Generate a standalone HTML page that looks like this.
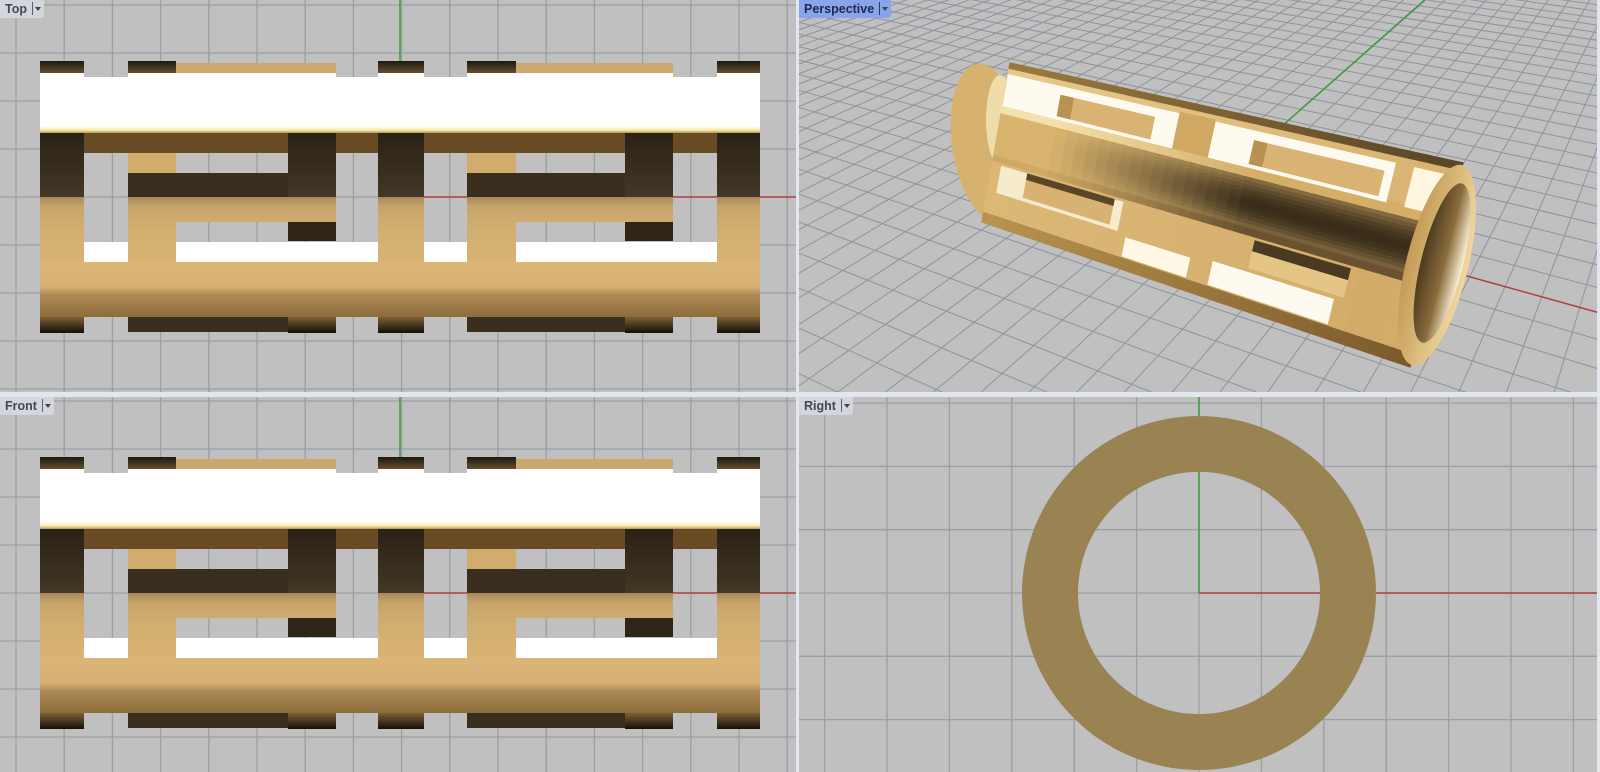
<!DOCTYPE html>
<html><head><meta charset="utf-8"><style>
html,body{margin:0;padding:0;background:#e4e7ec;overflow:hidden;width:1600px;height:772px;}
body{position:relative;font-family:"Liberation Sans",sans-serif;}
svg{position:absolute;left:0;top:0;}
.lab{position:absolute;height:18px;line-height:18px;font-size:12.5px;font-weight:bold;color:#3e4858;background:#d3d6dc;padding:0 0 0 5px;border-radius:0 0 3px 0;}
.lab span{display:inline-block;border-left:1px solid #59606c;margin-left:5px;width:11px;height:13px;vertical-align:-2px;position:relative}
.lab span:after{content:"";position:absolute;left:2px;top:5px;border-left:3.5px solid transparent;border-right:3.5px solid transparent;border-top:4px solid #444}
</style></head><body>
<svg width="1600" height="772" viewBox="0 0 1600 772" xmlns="http://www.w3.org/2000/svg">
<defs>
<clipPath id="cTop"><rect x="0" y="0" width="796" height="392"/></clipPath>
<clipPath id="cFront"><rect x="0" y="397" width="796" height="375"/></clipPath>
<clipPath id="cPersp"><rect x="799" y="0" width="798" height="392"/></clipPath>
<clipPath id="cRight"><rect x="799" y="397" width="798" height="375"/></clipPath>
<linearGradient id="gTop" x1="0" y1="0" x2="0" y2="1"><stop offset="0" stop-color="#1c1812"/><stop offset="1" stop-color="#6a5330"/></linearGradient>
<linearGradient id="gDark" x1="0" y1="0" x2="0" y2="1"><stop offset="0" stop-color="#2a2216"/><stop offset="1" stop-color="#433726"/></linearGradient>
<linearGradient id="gGlow" x1="0" y1="0" x2="0" y2="1"><stop offset="0" stop-color="#ffffff"/><stop offset="0.5" stop-color="#fbeea8"/><stop offset="1" stop-color="#9c7a3e"/></linearGradient>
<linearGradient id="gTan" x1="0" y1="197" x2="0" y2="262" gradientUnits="userSpaceOnUse"><stop offset="0" stop-color="#a8885a"/><stop offset="0.15" stop-color="#c6a46a"/><stop offset="0.5" stop-color="#d2ae70"/><stop offset="1" stop-color="#d8b374"/></linearGradient>
<linearGradient id="gBot" x1="0" y1="262" x2="0" y2="317" gradientUnits="userSpaceOnUse"><stop offset="0" stop-color="#dbb676"/><stop offset="0.45" stop-color="#d6b073"/><stop offset="0.6" stop-color="#ad8b55"/><stop offset="1" stop-color="#8c6c3b"/></linearGradient>
<linearGradient id="gEnd" x1="0" y1="0" x2="0" y2="1"><stop offset="0" stop-color="#7e6034"/><stop offset="1" stop-color="#140f08"/></linearGradient>
<linearGradient id="gCap" x1="0" y1="0" x2="1" y2="0"><stop offset="0" stop-color="#c49a55"/><stop offset="1" stop-color="#f0d8a0"/></linearGradient>
<linearGradient id="gHole" x1="0" y1="0" x2="1" y2="0"><stop offset="0" stop-color="#4b3a20"/><stop offset="0.55" stop-color="#8a6c3c"/><stop offset="1" stop-color="#fbf2d8"/></linearGradient>
<g id="tube">
 <rect x="40" y="61" width="44" height="13" fill="url(#gTop)"/>
 <rect x="128" y="61" width="48" height="13" fill="url(#gTop)"/>
 <rect x="176" y="63" width="160" height="11" fill="#cba870"/>
 <rect x="378" y="61" width="46" height="13" fill="url(#gTop)"/>
 <rect x="467" y="61" width="49" height="13" fill="url(#gTop)"/>
 <rect x="516" y="63" width="157" height="11" fill="#cba870"/>
 <rect x="717" y="61" width="43" height="13" fill="url(#gTop)"/>
 <rect x="40" y="73" width="44" height="5" fill="#fff"/>
 <rect x="128" y="73" width="208" height="5" fill="#fff"/>
 <rect x="378" y="73" width="46" height="5" fill="#fff"/>
 <rect x="467" y="73" width="206" height="5" fill="#fff"/>
 <rect x="717" y="73" width="43" height="5" fill="#fff"/>
 <rect x="40" y="77" width="720" height="50" fill="#fff"/>
 <rect x="40" y="126" width="720" height="8" fill="url(#gGlow)"/>
 <rect x="40" y="133" width="720" height="20" fill="#694b26"/>
 <rect x="128" y="153" width="48" height="20" fill="#d2ac6c"/>
 <rect x="467" y="153" width="49" height="20" fill="#d2ac6c"/>
 <rect x="128" y="173" width="208" height="24" fill="#3a2f1f"/>
 <rect x="467" y="173" width="206" height="24" fill="#3a2f1f"/>
 <rect x="40" y="133" width="44" height="64" fill="url(#gDark)"/>
 <rect x="288" y="133" width="48" height="64" fill="url(#gDark)"/>
 <rect x="378" y="133" width="46" height="64" fill="url(#gDark)"/>
 <rect x="625" y="133" width="48" height="64" fill="url(#gDark)"/>
 <rect x="717" y="133" width="43" height="64" fill="url(#gDark)"/>
 <rect x="40" y="197" width="44" height="65" fill="url(#gTan)"/>
 <rect x="128" y="197" width="48" height="65" fill="url(#gTan)"/>
 <rect x="176" y="197" width="160" height="25" fill="url(#gTan)"/>
 <rect x="378" y="197" width="46" height="65" fill="url(#gTan)"/>
 <rect x="467" y="197" width="49" height="65" fill="url(#gTan)"/>
 <rect x="516" y="197" width="157" height="25" fill="url(#gTan)"/>
 <rect x="717" y="197" width="43" height="65" fill="url(#gTan)"/>
 <rect x="288" y="222" width="48" height="19" fill="#2e2517"/>
 <rect x="625" y="222" width="48" height="19" fill="#2e2517"/>
 <rect x="84" y="242" width="44" height="20" fill="#fff"/>
 <rect x="176" y="242" width="202" height="20" fill="#fff"/>
 <rect x="424" y="242" width="43" height="20" fill="#fff"/>
 <rect x="516" y="242" width="201" height="20" fill="#fff"/>
 <rect x="40" y="262" width="720" height="55" fill="url(#gBot)"/>
 <rect x="40" y="317" width="44" height="16" fill="url(#gEnd)"/>
 <rect x="128" y="317" width="160" height="15" fill="#3a2e1f"/>
 <rect x="288" y="317" width="48" height="16" fill="url(#gEnd)"/>
 <rect x="378" y="317" width="46" height="16" fill="url(#gEnd)"/>
 <rect x="467" y="317" width="158" height="15" fill="#3a2e1f"/>
 <rect x="625" y="317" width="48" height="16" fill="url(#gEnd)"/>
 <rect x="717" y="317" width="43" height="16" fill="url(#gEnd)"/>
</g>
</defs>

<rect x="0" y="0" width="796" height="392" fill="#c0c0c0"/>
<rect x="0" y="397" width="796" height="375" fill="#c0c0c0"/>
<rect x="799" y="0" width="798" height="392" fill="#c0c0c0"/>
<rect x="799" y="397" width="798" height="375" fill="#c0c0c0"/>

<g id="gridTop" clip-path="url(#cTop)" stroke="#9a9ea5" stroke-width="1.3"></g>
<g id="gridFront" clip-path="url(#cFront)" stroke="#9a9ea5" stroke-width="1.3"></g>
<g id="gridRight" clip-path="url(#cRight)" stroke="#9a9ea5" stroke-width="1.3"></g>
<g id="gridPersp" clip-path="url(#cPersp)" stroke="#8e939b" stroke-width="1"></g>

<line x1="400" y1="0" x2="400" y2="62" stroke="#3c9a3c" stroke-width="1.5"/>
<line x1="400" y1="197" x2="796" y2="197" stroke="#b04040" stroke-width="1.5"/>
<line x1="400" y1="397" x2="400" y2="458" stroke="#3c9a3c" stroke-width="1.5"/>
<line x1="400" y1="593" x2="796" y2="593" stroke="#b04040" stroke-width="1.5"/>
<use href="#tube"/>
<use href="#tube" y="396"/>

<g clip-path="url(#cPersp)">
<line x1="1197" y1="201" x2="1425" y2="0" stroke="#3c9a3c" stroke-width="1.5"/>
<line x1="1197" y1="201" x2="1600" y2="313" stroke="#b04040" stroke-width="1.5"/>
<g id="persp"></g>
</g>

<g clip-path="url(#cRight)">
<line x1="1199" y1="397" x2="1199" y2="593" stroke="#3c9a3c" stroke-width="1.5"/>
<line x1="1199" y1="593" x2="1597" y2="593" stroke="#b04040" stroke-width="1.5"/>
<path fill="#998353" fill-rule="evenodd" d="M1022,593 a177,177 0 1,0 354,0 a177,177 0 1,0 -354,0 Z M1078,593 a121,121 0 1,0 242,0 a121,121 0 1,0 -242,0 Z"/>
</g>

<rect x="796" y="0" width="3" height="772" fill="#e2e6ee"/>
<rect x="0" y="392" width="1600" height="5" fill="#e2e6ee"/>
<rect x="1597" y="0" width="3" height="772" fill="#e2e6ee"/>
</svg>

<div class="lab" style="left:0;top:0;">Top<span></span></div>
<div class="lab" style="left:799px;top:0;background:#8aa4ec;color:#1e2a4a;">Perspective<span style="border-color:#2a3a6a"></span></div>
<div class="lab" style="left:0;top:397px;">Front<span></span></div>
<div class="lab" style="left:799px;top:397px;">Right<span></span></div>

<script>
(function(){
var NS="http://www.w3.org/2000/svg";
function ln(g,x1,y1,x2,y2){var l=document.createElementNS(NS,"line");l.setAttribute("x1",x1);l.setAttribute("y1",y1);l.setAttribute("x2",x2);l.setAttribute("y2",y2);g.appendChild(l);}
function poly(g,pts,fill,stroke){var p=document.createElementNS(NS,"polygon");p.setAttribute("points",pts.map(function(q){return q[0].toFixed(1)+","+q[1].toFixed(1)}).join(" "));p.setAttribute("fill",fill);if(stroke){p.setAttribute("stroke",fill);p.setAttribute("stroke-width","1.2");}g.appendChild(p);return p;}
var gt=document.getElementById("gridTop"),gf=document.getElementById("gridFront"),gr=document.getElementById("gridRight"),gp=document.getElementById("gridPersp");
for(var i=0;i<17;i++){var x=16+48.2*i;ln(gt,x,0,x,392);ln(gf,x,397,x,772);}
for(var j=0;j<9;j++){var y=5+48*j;ln(gt,0,y,796,y);ln(gf,0,y+396,796,y+396);}
for(i=-7;i<8;i++){x=1199+62.4*i;ln(gr,x,397,x,772);}
for(j=-3;j<4;j++){y=593+63.3*j;ln(gr,799,y,1597,y);}
var O=[1197,201],V1=[-605,-300],V2=[1763,-300],a=0.0146,b=0.032;
function P(u,v){var d=a*u+b*v+1;return [(a*u*V1[0]+b*v*V2[0]+O[0])/d,(a*u*V1[1]+b*v*V2[1]+O[1])/d];}
var N=160;
for(var u=-N;u<=N;u++){var v1=(0.03-1-a*u)/b,v2=400;if(v2<=v1)continue;var p1=P(u,v1),p2=P(u,v2);ln(gp,p1[0],p1[1],p2[0],p2[1]);}
for(var v=-N;v<=N;v++){var u1=(0.03-1-b*v)/a,u2=400;if(u2<=u1)continue;p1=P(u1,v);p2=P(u2,v);ln(gp,p1[0],p1[1],p2[0],p2[1]);}
var g=document.getElementById("persp");
var TL=[1010,63],TR=[1463,163],BR=[1410,367],BL=[982,222];
function Q(s,t){var L=[TL[0]+(BL[0]-TL[0])*t,TL[1]+(BL[1]-TL[1])*t],R=[TR[0]+(BR[0]-TR[0])*t,TR[1]+(BR[1]-TR[1])*t];return [L[0]+(R[0]-L[0])*s,L[1]+(R[1]-L[1])*s];}
function quad(s0,s1,t0,t1,fill,st){return poly(g,[Q(s0,t0),Q(s1,t0),Q(s1,t1),Q(s0,t1)],fill,st);}
function hx(c){return [parseInt(c.substr(1,2),16),parseInt(c.substr(3,2),16),parseInt(c.substr(5,2),16)];}
function mix(c1,c2,f){var A=hx(c1),B=hx(c2);return "rgb("+[0,1,2].map(function(k){return Math.round(A[k]+(B[k]-A[k])*f)}).join(",")+")";}
function cl(x){return x<0?0:x>1?1:x;}
var e=document.createElementNS(NS,"ellipse");e.setAttribute("cx",988);e.setAttribute("cy",143);e.setAttribute("rx",36);e.setAttribute("ry",80);e.setAttribute("transform","rotate(-8 988 143)");e.setAttribute("fill","#d7b26f");g.appendChild(e);
var e2=document.createElementNS(NS,"ellipse");e2.setAttribute("cx",1000);e2.setAttribute("cy",120);e2.setAttribute("rx",14);e2.setAttribute("ry",45);e2.setAttribute("fill","#f0dca8");g.appendChild(e2);
var NS_=40,NT=50;
for(var ti=0;ti<NT;ti++){for(var si=0;si<NS_;si++){
 var s0=si/NS_,s1=(si+1)/NS_,t0=ti/NT,t1=(ti+1)/NT,s=(s0+s1)/2,t=(t0+t1)/2,c;
 var dk=cl((s-0.12)/0.45);
 if(t<0.05)c=mix("#9a7a40","#5a4424",s);
 else if(t<0.27)c=mix("#e6c98a","#d8b270",s);
 else if(t<0.33)c=mix("#f3e0ac","#d5ae68",dk);
 else if(t<0.58){var pr=Math.sin((t-0.33)/0.25*Math.PI);c=mix("#d9b46e","#3a2d1a",dk*(0.55+0.45*pr));}
 else if(t<0.63)c=mix("#cfa965","#6a5230",dk);
 else if(t<0.93)c=mix("#dcb877","#d2ab68",s);
 else c=mix("#b8944f","#7a5a2c",s);
 quad(s0,s1,t0,t1,c,true);
}}
quad(0.0,0.38,0.07,0.27,"#fffaf0");
quad(0.46,0.86,0.07,0.27,"#fffaf0");
quad(0.90,0.97,0.07,0.27,"#fff6e0");
quad(0.12,0.33,0.12,0.25,"#d9b374");
quad(0.12,0.15,0.12,0.25,"#b89250");
quad(0.55,0.84,0.12,0.25,"#d9b374");
quad(0.55,0.58,0.12,0.25,"#b89250");
quad(0.38,0.46,0.06,0.27,"#d0a862");
quad(0.02,0.30,0.63,0.80,"#f6ebcc");
quad(0.08,0.28,0.66,0.78,"#d8b273");
quad(0.08,0.28,0.63,0.67,"#5a4526");
quad(0.32,0.47,0.82,0.93,"#fff8e6");
quad(0.52,0.80,0.80,0.93,"#fffaf0");
quad(0.50,0.60,0.63,0.80,"#d7b171");
quad(0.60,0.82,0.63,0.69,"#4a3a22");
quad(0.60,0.82,0.69,0.78,"#e4c585");
quad(0.84,0.92,0.62,0.93,"#d2ab68");
var rc=document.createElementNS(NS,"ellipse");rc.setAttribute("cx",1437);rc.setAttribute("cy",265);rc.setAttribute("rx",31);rc.setAttribute("ry",103);rc.setAttribute("transform","rotate(14 1437 265)");rc.setAttribute("fill","url(#gCap)");g.appendChild(rc);
var rh=document.createElementNS(NS,"ellipse");rh.setAttribute("cx",1442);rh.setAttribute("cy",263);rh.setAttribute("rx",21);rh.setAttribute("ry",82);rh.setAttribute("transform","rotate(14 1442 263)");rh.setAttribute("fill","url(#gHole)");g.appendChild(rh);
})();
</script>
</body></html>
